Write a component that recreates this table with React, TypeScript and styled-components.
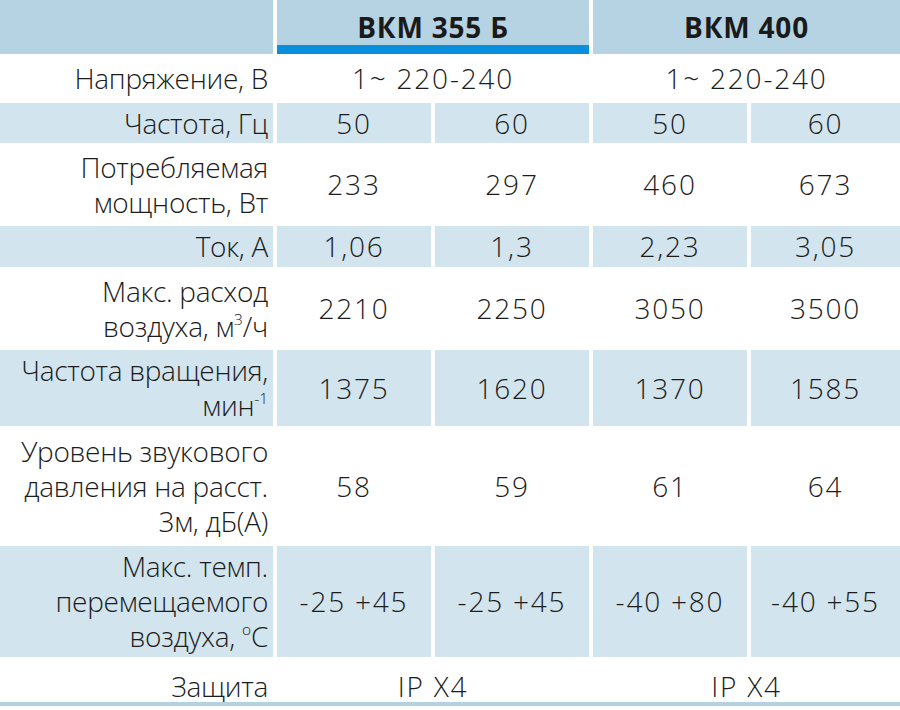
import React from 'react';
import styled, { createGlobalStyle } from 'styled-components';

const Global = createGlobalStyle`
  html, body { margin: 0; padding: 0; background: #ffffff; }
  body { font-family: "Open Sans", "Noto Sans", sans-serif; color: #1c1c1c; }
`;

const COLS = '273px 154px 154px 154px 149px';

const Table = styled.div`
  width: 900px;
  display: flex;
  flex-direction: column;
`;

const Row = styled.div<{ $h: number }>`
  display: grid;
  grid-template-columns: ${COLS};
  column-gap: 4px;
  height: ${(p) => p.$h}px;
`;

type Tone = 'white' | 'blue' | 'head';
const bg: Record<Tone, string> = {
  white: '#ffffff',
  blue: '#d2e4ee',
  head: '#b5d3e3',
};

const Cell = styled.div<{ $tone: Tone; $span?: number; $shift?: number }>`
  background: ${(p) => bg[p.$tone]};
  grid-column: span ${(p) => p.$span ?? 1};
  display: flex;
  align-items: center;
  justify-content: center;
  padding-top: ${(p) => p.$shift ?? 0}px;
  box-sizing: border-box;
  font-size: 28px;
  font-weight: 350;
  line-height: 35px;
`;

const LabelCell = styled(Cell)`
  justify-content: flex-end;
  text-align: right;
  padding-right: 5px;
  letter-spacing: -0.3px;
`;

const ValueCell = styled(Cell)`
  letter-spacing: 1.8px;
  white-space: pre;
`;

const HeadCell = styled(Cell)<{ $accent?: boolean }>`
  font-weight: 700;
  letter-spacing: 0.8px;
  color: #1a1a1a;
  box-shadow: ${(p) => (p.$accent ? 'inset 0 -9px 0 #0a8fdc' : 'none')};
`;

const Sup = styled.sup`
  font-size: 0.55em;
  line-height: 0;
  vertical-align: 0.75em;
  letter-spacing: 0;
`;

const Rule = styled.div`
  height: 4px;
  background: #b3d1e1;
`;

type Val = { v: React.ReactNode; span?: number };
type RowDef = {
  label: React.ReactNode;
  tone: Tone;
  h: number;
  shift?: number;
  values: Val[];
};

const four = (a: string, b: string, c: string, d: string): Val[] => [
  { v: a },
  { v: b },
  { v: c },
  { v: d },
];

const rows: RowDef[] = [
  {
    label: 'Напряжение, В',
    tone: 'white',
    h: 49,
    values: [
      { v: '1~ 220-240', span: 2 },
      { v: '1~ 220-240', span: 2 },
    ],
  },
  { label: 'Частота, Гц', tone: 'blue', h: 40, values: four('50', '60', '50', '60') },
  {
    label: (
      <>
        Потребляемая
        <br />
        мощность, Вт
      </>
    ),
    tone: 'white',
    h: 83,
    values: four('233', '297', '460', '673'),
  },
  { label: 'Ток, А', tone: 'blue', h: 41, values: four('1,06', '1,3', '2,23', '3,05') },
  {
    label: (
      <>
        Макс. расход
        <br />
        воздуха, м<Sup>3</Sup>/ч
      </>
    ),
    tone: 'white',
    h: 83,
    values: four('2210', '2250', '3050', '3500'),
  },
  {
    label: (
      <>
        Частота вращения,
        <br />
        мин<Sup>-1</Sup>
      </>
    ),
    tone: 'blue',
    h: 76,
    values: four('1375', '1620', '1370', '1585'),
  },
  {
    label: (
      <>
        Уровень звукового
        <br />
        давления на расст.
        <br />
        3м, дБ(А)
      </>
    ),
    tone: 'white',
    h: 120,
    values: four('58', '59', '61', '64'),
  },
  {
    label: (
      <>
        Макс. темп.
        <br />
        перемещаемого
        <br />
        воздуха, <Sup>o</Sup>C
      </>
    ),
    tone: 'blue',
    h: 111,
    values: four('-25 +45', '-25 +45', '-40 +80', '-40 +55'),
  },
  {
    label: 'Защита',
    tone: 'white',
    h: 45,
    shift: 12,
    values: [
      { v: 'IP X4', span: 2 },
      { v: 'IP X4', span: 2 },
    ],
  },
];

export default function App() {
  return (
    <>
      <Global />
      <Table>
        <Row $h={54}>
          <HeadCell $tone="head" />
          <HeadCell $tone="head" $span={2} $accent>
            ВКМ 355 Б
          </HeadCell>
          <HeadCell $tone="head" $span={2}>
            ВКМ 400
          </HeadCell>
        </Row>
        {rows.map((r, i) => (
          <Row key={i} $h={r.h}>
            <LabelCell $tone={r.tone} $shift={r.shift}>
              <span>{r.label}</span>
            </LabelCell>
            {r.values.map((val, j) => (
              <ValueCell key={j} $tone={r.tone} $span={val.span} $shift={r.shift}>
                {val.v}
              </ValueCell>
            ))}
          </Row>
        ))}
        <Rule />
      </Table>
    </>
  );
}
